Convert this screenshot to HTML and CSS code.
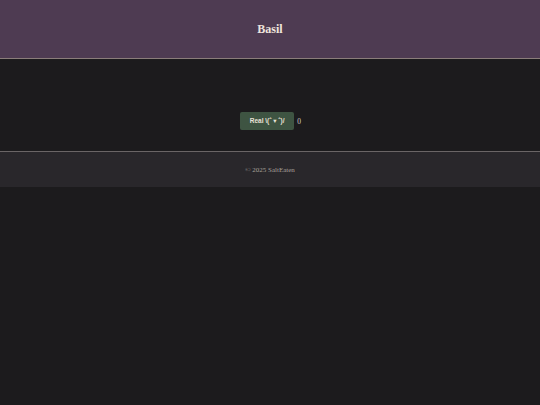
FILE: index.html
```html
<!DOCTYPE html>
<html>
<head>
<meta charset="utf-8">
<link rel="stylesheet" href="styles.css">
</head>
<body>
<header class="site-header"><h1 class="title">Basil</h1></header>
<main class="main">
  <div class="counter">
    <button class="real-btn">Real \(ˆ ▾ ˆ)/</button>
    <span class="count">0</span>
  </div>
</main>
<footer class="site-footer">© 2025 SaltEaten</footer>
</body>
</html>
```
FILE: styles.css
```css
html, body {
  margin: 0;
  padding: 0;
  background: #1c1b1d;
  height: 100%;
}
body {
  font-family: "Liberation Serif", "DejaVu Serif", serif;
  color: #d8d0c8;
}
.site-header {
  background: #4e3b52;
  height: 58px;
  border-bottom: 1px solid #8a7d7a;
  display: flex;
  align-items: center;
  justify-content: center;
}
.title {
  margin: 0;
  font-size: 12px;
  font-weight: bold;
  color: #eee4dc;
}
.main {
  height: 92px;
  box-sizing: border-box;
  padding-top: 53px;
  display: flex;
  align-items: flex-start;
  justify-content: center;
}
.counter {
  display: flex;
  align-items: center;
  gap: 3px;
  margin-left: 1px;
}
.real-btn {
  background: #3e5442;
  color: #e8e2d8;
  border: none;
  border-radius: 2px;
  height: 18px;
  width: 54px;
  padding: 0;
  font-family: "Liberation Sans", "DejaVu Sans", sans-serif;
  font-size: 6.5px;
  font-weight: bold;
}
.count {
  font-size: 7.5px;
  color: #d8d0c8;
}
.site-footer {
  background: #29272b;
  border-top: 1px solid #6a6566;
  height: 35px;
  display: flex;
  align-items: center;
  justify-content: center;
  font-size: 7px;
  color: #a8a09a;
}
```
